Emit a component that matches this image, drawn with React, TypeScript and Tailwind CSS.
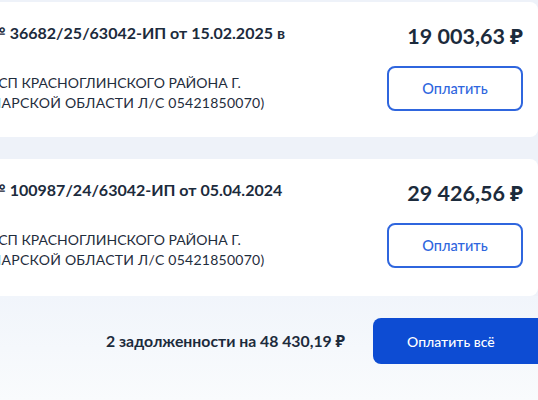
const debts = [
  {
    id: "№ 36682/25/63042-ИП от 15.02.2025 в",
    amount: "19 003,63 ₽",
    first: "ОСП КРАСНОГЛИНСКОГО РАЙОНА Г.",
    second: "САМАРСКОЙ ОБЛАСТИ Л/С 05421850070)",
    height: "h-[135px] mt-[2px]",
  },
  {
    id: "№ 100987/24/63042-ИП от 05.04.2024",
    amount: "29 426,56 ₽",
    first: "ОСП КРАСНОГЛИНСКОГО РАЙОНА Г.",
    second: "САМАРСКОЙ ОБЛАСТИ Л/С 05421850070)",
    height: "h-[137px]",
  },
];

export default function App() {
  return (
    <div
      className="w-[538px] h-[400px] overflow-hidden bg-[#eef2f9] text-[#0b1f33]"
      style={{ fontFamily: "Lato, 'Noto Sans', sans-serif" }}
    >
      <div className="flex flex-col gap-[22px] -ml-[36px] w-[574px]">
        {debts.map((d) => (
          <section key={d.id} className={`${d.height} bg-white rounded-lg flex justify-between pl-6 pr-[15px] pt-[21px]`}>
            <div className="whitespace-nowrap">
              <h3 className="text-[16px] leading-6 font-bold text-[#1c2b3c] -mt-[2px] -ml-[1px]">{d.id}</h3>
              <div className="mt-[28px] text-[14px] leading-5 text-[#1f2d3d]">
                <p className="-ml-[1px]">{d.first}</p>
                <p className="-ml-[19px] tracking-[0.25px]">{d.second}</p>
              </div>
            </div>
            <div className="flex flex-col items-end -mt-[1px]">
              <div className="text-[21.5px] leading-7 font-bold text-[#1c2b3c]">{d.amount}</div>
              <button className="mt-[16px] w-[136px] h-[45px] rounded-lg border-2 border-[#2f66de] text-[#2f66de] text-[14.5px] font-medium bg-white">
                Оплатить
              </button>
            </div>
          </section>
        ))}
      </div>
      <div className="h-[104px] bg-gradient-to-b from-[#f1f5fb] to-[#f9fbfd] flex items-start pt-[22px] pl-[106px] gap-7 whitespace-nowrap">
        <span className="h-[46px] flex items-center text-[15.8px] font-bold text-[#1c2b3c]">
          2 задолженности на 48 430,19 ₽
        </span>
        <button className="h-[46px] w-[190px] shrink-0 rounded-lg bg-[#0d4cd3] text-white text-[14px] font-medium text-left pl-[34px]">
          Оплатить всё
        </button>
      </div>
    </div>
  );
}
